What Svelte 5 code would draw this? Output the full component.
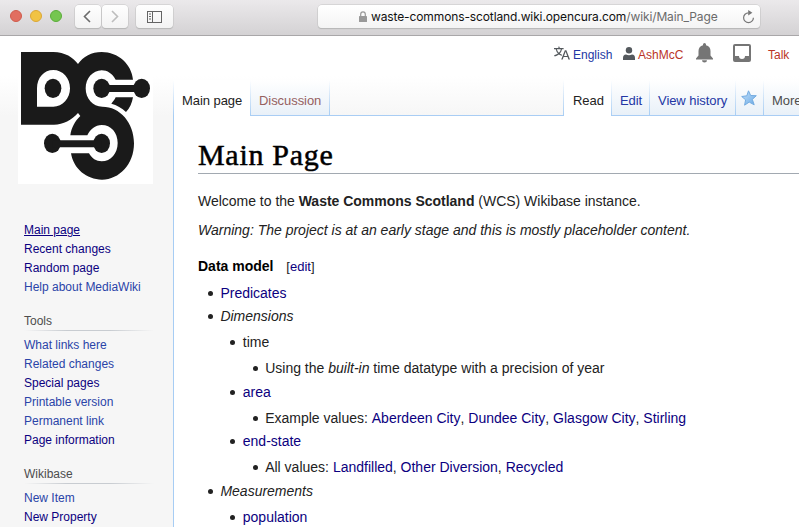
<script>
  const nav = [
    { links: [['Main page', 'v u'], ['Recent changes', 'v'], ['Random page', 'v'], ['Help about MediaWiki', '']] },
    { title: 'Tools', links: [['What links here', ''], ['Related changes', ''], ['Special pages', 'v'], ['Printable version', ''], ['Permanent link', ''], ['Page information', 'v']] },
    { title: 'Wikibase', links: [['New Item', ''], ['New Property', 'v']] }
  ];
</script>

<div class="window">
  <header class="toolbar">
    <div class="lights"><i class="red"></i><i class="yellow"></i><i class="green"></i></div>
    <div class="history">
      <span class="btn"><svg width="26" height="23" viewBox="0 0 26 23"><path d="M15 6 9.500 11.500 15 17" fill="none" stroke="#6b6b6b" stroke-width="1.600"/></svg></span>
      <span class="btn"><svg width="26" height="23" viewBox="0 0 26 23"><path d="M10 6 15.500 11.500 10 17" fill="none" stroke="#bdbdbd" stroke-width="1.600"/></svg></span>
    </div>
    <span class="btn side"><svg width="38" height="23" viewBox="0 0 38 23" fill="none" stroke="#646464"><rect x="11.500" y="6.500" width="14" height="11"/><path d="M16.500 6.500v11M13 9h2M13 11.500h2M13 14h2"/></svg></span>
    <div class="address">
      <svg class="lock" width="8" height="11" viewBox="0 0 8 11"><rect y="5" width="8" height="6" rx=".6" fill="#999"/><path d="M1.700 5V3.200a2.300 2.300 0 0 1 4.600 0V5" fill="none" stroke="#999" stroke-width="1.200"/></svg>
      <span class="url">waste-commons-scotland.wiki.opencura.com<em>/wiki/Main_Page</em></span>
      <svg class="reload" width="13" height="14" viewBox="0 0 13 14"><path d="M6.500 2.800A4.900 4.900 0 1 0 11.400 7.700" fill="none" stroke="#777" stroke-width="1.200"/><path d="M6.200 0v5.400L10.400 2.800z" fill="#777"/></svg>
    </div>
  </header>

  <div class="page">
    <aside>
      <svg class="logo" width="135" height="135" viewBox="24 39 405 405">
        <path fill="#fff" d="M24 39h405v405H24z"/>
        <g fill="#1a1a1a">
          <path fill-rule="evenodd" d="M33 48H130C165 48 190 65 204 84C219 62 245 48 275 48C325 48 365 85 369 131H317C307 113 292 103 275 103C248 103 227 128 227 157C227 188 248 212 277 212C330 212 372 260 372 322C372 385 328 431 276 431C230 431 190 398 183 352H237C245 367 259 376 275 376C303 376 323 352 323 321C323 290 303 267 275 267C256 267 240 280 232 298H181C184 275 195 255 211 240L204 231C185 252 160 266 132 266H33ZM81 212H130C158 212 180 188 180 157C180 126 158 102 130 102C102 102 81 125 81 157Z"/>
          <path d="M317 184H369C366 202 359 217 348 228C336 216 320 207 304 203C309 197 314 191 317 184Z"/>
          <ellipse cx="129" cy="157" rx="25" ry="29"/>
          <ellipse cx="275" cy="157" rx="25" ry="29"/><ellipse cx="395" cy="157" rx="25" ry="29"/><path d="M275 147h120v21H275z"/>
          <ellipse cx="127" cy="322" rx="25" ry="29"/><ellipse cx="275" cy="322" rx="25" ry="29"/><path d="M127 313h148v21H127z"/>
        </g>
      </svg>
      {#each nav as group}
        <nav>
          {#if group.title}<h3>{group.title}</h3>{/if}
          {#each group.links as [label, kind]}<a class={kind}>{label}</a>{/each}
        </nav>
      {/each}
    </aside>

    <main>
      <div class="personal">
        <svg class="lang" width="16" height="14" viewBox="0 1.500 20 17" preserveAspectRatio="none" fill="#54595d"><path d="M20 18h-1.440a.6.6 0 0 1-.4-.120.800.800 0 0 1-.230-.310L17 15h-5l-1 2.540a.800.800 0 0 1-.220.300.590.590 0 0 1-.400.140H9l4.550-11.470h1.890zm-3.530-4.310L14.890 9.500a12 12 0 0 1-.390-1.240q-.090.370-.190.690l-.190.560-1.580 4.190zm-6.300-1.580a13.400 13.400 0 0 1-2.910-1.410 11.460 11.460 0 0 0 2.810-5.370H12V4H7.310a4 4 0 0 0-.200-.560C6.870 2.790 6.600 2 6.600 2l-1.470.5s.400.890.600 1.500H0v1.330h2.150A11.230 11.230 0 0 0 5 10.700a17.200 17.200 0 0 1-5 2.100q.560.820.870 1.380a23.300 23.300 0 0 0 5.220-2.510 15.600 15.600 0 0 0 3.560 1.770zM3.630 5.330h4.910a8.100 8.100 0 0 1-2.450 4.450 9.100 9.100 0 0 1-2.460-4.450"/></svg>
        <a class="english">English</a>
        <svg class="user" width="12" height="13" viewBox="0 0 12 13" fill="#54595d"><circle cx="6" cy="3.300" r="3.200"/><path d="M0 13v-2q0-3.500 3-3.500 3 1.600 6 0 3 0 3 3.500v2z"/></svg>
        <a class="red ash">AshMcC</a>
        <svg class="bell" width="17" height="20" viewBox="0 0 17 20" fill="#757575"><path d="M7 1.500a1.500 1.500 0 0 1 3 0v.700c3 .700 4.500 3 4.500 5.800v4.500l2.500 3v1H0v-1l2.500-3V8C2.500 5 4.200 2.900 7 2.200zM6 17.300h5a2.500 2.300 0 0 1-5 0z"/></svg>
        <svg class="tray" width="18" height="18" viewBox="0 0 18 18"><path fill="#757575" fill-rule="evenodd" d="M2 0h14a2 2 0 0 1 2 2v14a2 2 0 0 1-2 2H2a2 2 0 0 1-2-2V2a2 2 0 0 1 2-2zm0 2v10h4a3 3 0 0 0 6 0h4V2z"/></svg>
        <a class="red talk">Talk</a>
      </div>
      <div class="tabs">
        <span class="tab selected mainpage"><b>Main page</b></span>
        <span class="tab disc"><b>Discussion</b></span>
        <span class="gap"></span>
        <span class="tab selected read"><b>Read</b></span>
        <span class="tab edit"><b>Edit</b></span>
        <span class="tab hist"><b>View history</b></span>
        <span class="tab star"><svg width="16" height="16" viewBox="0 0 16 16"><defs><linearGradient id="s" x2="1" y2="1"><stop stop-color="#c5e1fa"/><stop offset="1" stop-color="#67a8e5"/></linearGradient></defs><path d="M7.500 .8 9.700 5.500 15.300 5.700 11.300 9.400 13.200 14.800 8.200 12.100 3.600 15.200 4.600 9.800.7 6.500 5.800 5.800z" fill="url(#s)" stroke="#73abe0" stroke-width="1"/></svg></span>
        <span class="tab more"><b>More</b></span>
      </div>
      <article>
        <h1>Main Page</h1>
        <p><span class="welcome">Welcome to the <strong>Waste Commons Scotland</strong> (WCS) Wikibase instance.</span></p>
        <p class="warning"><i>Warning: The project is at an early stage and this is mostly placeholder content.</i></p>
        <h2>Data model <span>[<a>edit</a>]</span></h2>
        <ul>
          <li><a>Predicates</a></li>
          <li><i>Dimensions</i>
            <ul>
              <li>time<ul><li>Using the <i>built-in</i> time datatype with a precision of year</li></ul></li>
              <li><a>area</a><ul><li class="areas">Example values: <a>Aberdeen City</a>, <a>Dundee City</a>, <a>Glasgow City</a>, <a>Stirling</a></li></ul></li>
              <li><a>end-state</a><ul><li>All values: <a>Landfilled</a>, <a>Other Diversion</a>, <a>Recycled</a></li></ul></li>
            </ul>
          </li>
          <li><i>Measurements</i><ul><li><a>population</a></li></ul></li>
        </ul>
      </article>
    </main>
  </div>
</div>

<style>
  :global(body) { margin: 0; overflow: hidden; }
  .window { width: 799px; height: 527px; overflow: hidden; font-family: "Liberation Sans", Arial, sans-serif; color: #222; display: flex; flex-direction: column; background: #fff; }
  svg { display: block; flex: none; }
  .toolbar { box-sizing: border-box; height: 36px; flex: none; display: flex; align-items: flex-start; padding: 5px 0 0 10px; background: linear-gradient(#ebe9eb, #d4d2d4); border-bottom: 1px solid #a9a7a9; }
  .lights { display: flex; gap: 8px; padding-top: 5px; width: 65px; }
  .lights i { box-sizing: border-box; width: 12px; height: 12px; border-radius: 50%; border: 1px solid #d05b4b; background: #e16e60; }
  .lights .yellow { background: #f1c343; border-color: #dba736; }
  .lights .green { background: #75c650; border-color: #5bad3a; }
  .btn { background: linear-gradient(#fefefe, #f3f3f3); border-radius: 4px; box-shadow: 0 0 0 .5px #c4c4c4, 0 1px 1px #aaa; height: 23px; }
  .history { display: flex; gap: 1px; width: 61px; }
  .side { width: 37px; }
  .address { margin-left: 145px; width: 442px; height: 23px; background: linear-gradient(#fff, #f4f4f4); border-radius: 4px; box-shadow: 0 0 0 .5px #c4c4c4, 0 1px 1px #aaa; display: flex; align-items: center; }
  .lock { margin: 0 4px 0 41px; }
  .url { width: 375px; white-space: nowrap; font: 12px/24px Inter, "Liberation Sans", sans-serif; letter-spacing: -.115px; color: #111; }
  .url em { font-style: normal; color: #6b6b6b; }
  .reload { margin-left: -4px; }
  .page { display: flex; flex: 1; min-height: 0; background: linear-gradient(#fff 0, #fff 40px, #f6f6f6 80px); }
  aside { width: 173px; flex: none; box-sizing: border-box; padding: 13px 0 0 18px; }
  .logo { margin-bottom: 37px; }
  nav { padding-left: 6px; margin-bottom: 15px; }
  nav a, nav h3 { display: block; width: max-content; font-size: 12px; line-height: 19px; height: 19px; white-space: nowrap; color: #2a44a8; font-weight: 400; }
  nav:nth-of-type(3) a { line-height: 18px; }
  nav a.v { color: #0b0080; }
  nav a.u { text-decoration: underline; text-underline-offset: 1px; text-decoration-thickness: 1px; }
  nav h3 { margin: 0 0 5px; color: #4d4d4d; width: 130px; background: linear-gradient(90deg, transparent, #c8ccd1 33%, #c8ccd1 66%, transparent) 0 100% / 100% 1px no-repeat; }
  main { flex: 1; min-width: 0; display: flex; flex-direction: column; }
  .personal { height: 44px; flex: none; display: flex; align-items: flex-start; padding-left: 381px; font-size: 12px; line-height: 38px; white-space: nowrap; color: #2a4b9f; }
  .personal a { color: #2336a4; }
  .personal a.red { color: #ba3426; }
  .lang { margin: 10px 3px 0 0; }
  .english { width: 50px; }
  .user { margin: 11px 3px 0 0; }
  .ash { width: 58px; }
  .bell { margin: 7px 20px 0 0; }
  .tray { margin: 8px 17px 0 0; }
  .tabs { height: 36px; flex: none; display: flex; overflow: hidden; background: linear-gradient(90deg, #a9cdf4, #a9cdf4) 0 100% / 100% 1px no-repeat; }
  .tab { box-sizing: border-box; height: 36px; flex: none; white-space: nowrap; font-size: 13px; letter-spacing: -.06px; line-height: 41px; padding-left: 8px; color: #2336a4; background: linear-gradient(#fff0, #a7cdf4) 100% 0 / 1px 100% no-repeat, linear-gradient(#a9cdf4, #a9cdf4) 0 100% / 100% 1px no-repeat, linear-gradient(#fff, #e8f0f8); }
  .tab b { font-weight: 400; }
  .selected { color: #222; background: linear-gradient(#fff0, #a7cdf4) 100% 0 / 1px 100% no-repeat, #fff; }
  .mainpage { width: 78px; padding-left: 9px; background: linear-gradient(#fff0, #a7cdf4) 0 0 / 1px 100% no-repeat, linear-gradient(#fff0, #a7cdf4) 100% 0 / 1px 100% no-repeat, #fff; }
  .disc { width: 79px; color: #96615f; }
  .gap { width: 234px; flex: none; background: linear-gradient(#fff0, #a7cdf4) 100% 0 / 1px 100% no-repeat; }
  .read { width: 48px; padding-left: 9px; }
  .edit { width: 38px; }
  .hist { width: 86px; }
  .star { width: 28px; padding: 10px 0 0 5px; }
  .more { width: 60px; color: #4d4d4d; }
  article { flex: 1; background: #fff; border-left: 1px solid #a7cdf4; padding: 22px 0 0 24px; font-size: 14px; line-height: 22px; white-space: nowrap; }
  h1 { margin: 0 0 16px; height: 35px; border-bottom: 1px solid #a2a9b1; font: 400 30px/34px "Liberation Serif", serif; letter-spacing: .7px; color: #000; -webkit-text-stroke: .5px #000; }
  p { margin: 0 0 7px; height: 22px; }
  .welcome { letter-spacing: -.015px; }
  h2 { margin: 0 0 5px; padding-top: 7px; height: 22px; font-size: 14px; line-height: 22px; color: #000; }
  h2 span { font-size: 13px; font-weight: 400; margin-left: 9px; color: #222; }
  article a { color: #0b0080; }
  ul { list-style: none; margin: 4px 0 0; padding: 0 0 0 22.400px; }
  li { margin-bottom: 1.400px; position: relative; }
  li::before { content: ""; position: absolute; left: -12.500px; top: 9px; width: 5px; height: 5px; border-radius: 50%; background: #222; }
  .areas { font-kerning: none; }
</style>
